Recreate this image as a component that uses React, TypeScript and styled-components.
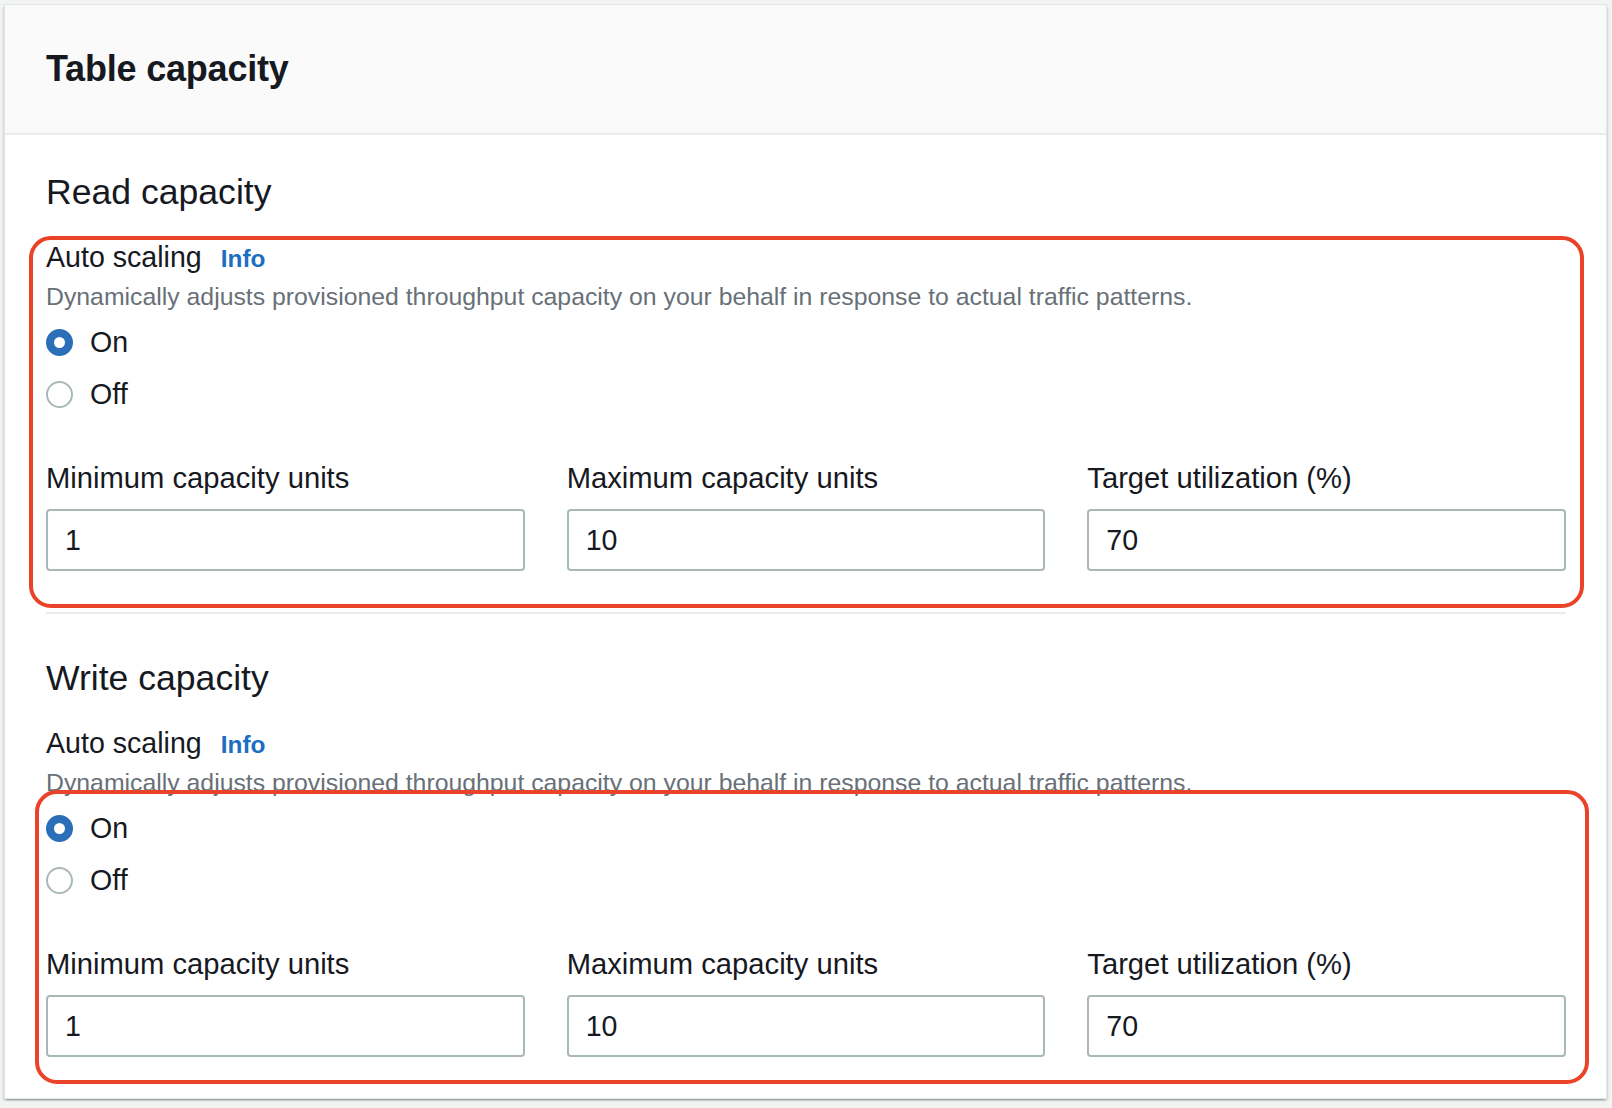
import styled, { createGlobalStyle } from 'styled-components'

const GlobalStyle = createGlobalStyle`
  body {
    margin: 0;
    background: #f2f3f3;
    font-family: "Liberation Sans", Arial, sans-serif;
    color: #16191f;
  }
`

const Page = styled.div`
  padding: 5px 6px 10px 5px;
`

const Card = styled.div`
  width: 1601px;
  background: #ffffff;
  box-shadow: 0 0 0 1px #e3e6e6, 0 2px 2px 0 rgba(0, 28, 36, 0.3),
    2px 2px 2px 0 rgba(0, 28, 36, 0.12), -2px 2px 2px 0 rgba(0, 28, 36, 0.12);
`

const Header = styled.div`
  height: 128px;
  padding: 0 41px;
  display: flex;
  align-items: center;
  background: #fafafa;
  border-bottom: 2px solid #eaeded;
`

const Title = styled.h2`
  margin: 0;
  font-size: 36px;
  font-weight: 700;
  letter-spacing: -0.2px;
`

const Body = styled.div`
  padding: 0 40px 0 41px;
`

const Section = styled.section<{ $top: number; $last?: boolean }>`
  position: relative;
  padding-top: ${p => p.$top}px;
  padding-bottom: 41px;
  border-bottom: ${p => (p.$last ? 'none' : '2px solid #eaeded')};
`

const SectionTitle = styled.h3`
  margin: 0;
  font-size: 35.6px;
  line-height: 44px;
  font-weight: 400;
`

const LabelRow = styled.div`
  margin-top: 23px;
  display: flex;
  align-items: baseline;
  gap: 19px;
  line-height: 40px;
`

const Label = styled.span`
  font-size: 28.6px;
`

const InfoLink = styled.a`
  font-size: 24.4px;
  font-weight: 700;
  color: #1b6ec2;
  text-decoration: none;
`

const Description = styled.div`
  margin-top: 2px;
  font-size: 24.8px;
  line-height: 32px;
  color: #687078;
`

const RadioGroup = styled.div`
  margin-top: 3px;
  display: flex;
  flex-direction: column;
`

const RadioRow = styled.label`
  height: 52px;
  display: flex;
  align-items: center;
  gap: 17px;
  font-size: 28.6px;
`

const RadioDot = styled.span<{ $checked: boolean }>`
  box-sizing: border-box;
  width: 27px;
  height: 27px;
  border-radius: 50%;
  background: #ffffff;
  border: ${p => (p.$checked ? '8px solid #2a6fb7' : '2px solid #aab7b8')};
`

const FieldGrid = styled.div`
  margin-top: 38px;
  display: grid;
  grid-template-columns: repeat(3, 1fr);
  column-gap: 42px;
`

const Field = styled.div`
  display: flex;
  flex-direction: column;
`

const FieldLabel = styled.div`
  font-size: 29.2px;
  line-height: 40px;
  margin-bottom: 11px;
`

const Input = styled.input`
  box-sizing: border-box;
  height: 62px;
  width: 100%;
  padding: 0 17px;
  border: 2px solid #aab7b8;
  border-radius: 4px;
  font-family: "Liberation Sans", Arial, sans-serif;
  font-size: 28.6px;
  color: #16191f;
  background: #ffffff;
  outline: none;
`

// hand-drawn style callout around a group of controls
const Callout = styled.div<{ $t: number; $l: number; $r: number; $b: number }>`
  position: absolute;
  top: ${p => p.$t}px;
  left: ${p => p.$l}px;
  right: ${p => p.$r}px;
  bottom: ${p => p.$b}px;
  border: 4.5px solid #ea4329;
  border-radius: 22px;
  pointer-events: none;
`

type Capacity = {
  title: string
  min: string
  max: string
  target: string
}

const sections: Capacity[] = [
  { title: 'Read capacity', min: '1', max: '10', target: '70' },
  { title: 'Write capacity', min: '1', max: '10', target: '70' },
]

const callouts = [
  { t: 101, l: -17, r: -18, b: 4 },
  { t: 176, l: -11, r: -23, b: 14 },
]

function CapacitySection({ cap, index }: { cap: Capacity; index: number }) {
  const c = callouts[index]
  return (
    <Section $top={index === 0 ? 35 : 42} $last={index === sections.length - 1}>
      <SectionTitle>{cap.title}</SectionTitle>
      <LabelRow>
        <Label>Auto scaling</Label>
        <InfoLink href="#">Info</InfoLink>
      </LabelRow>
      <Description>
        Dynamically adjusts provisioned throughput capacity on your behalf in response to actual traffic patterns.
      </Description>
      <RadioGroup>
        <RadioRow>
          <RadioDot $checked={true} />
          On
        </RadioRow>
        <RadioRow>
          <RadioDot $checked={false} />
          Off
        </RadioRow>
      </RadioGroup>
      <FieldGrid>
        <Field>
          <FieldLabel>Minimum capacity units</FieldLabel>
          <Input defaultValue={cap.min} readOnly />
        </Field>
        <Field>
          <FieldLabel>Maximum capacity units</FieldLabel>
          <Input defaultValue={cap.max} readOnly />
        </Field>
        <Field>
          <FieldLabel>Target utilization (%)</FieldLabel>
          <Input defaultValue={cap.target} readOnly />
        </Field>
      </FieldGrid>
      <Callout $t={c.t} $l={c.l} $r={c.r} $b={c.b} />
    </Section>
  )
}

export default function App() {
  return (
    <>
      <GlobalStyle />
      <Page>
        <Card>
          <Header>
            <Title>Table capacity</Title>
          </Header>
          <Body>
            {sections.map((s, i) => (
              <CapacitySection key={s.title} cap={s} index={i} />
            ))}
          </Body>
        </Card>
      </Page>
    </>
  )
}
